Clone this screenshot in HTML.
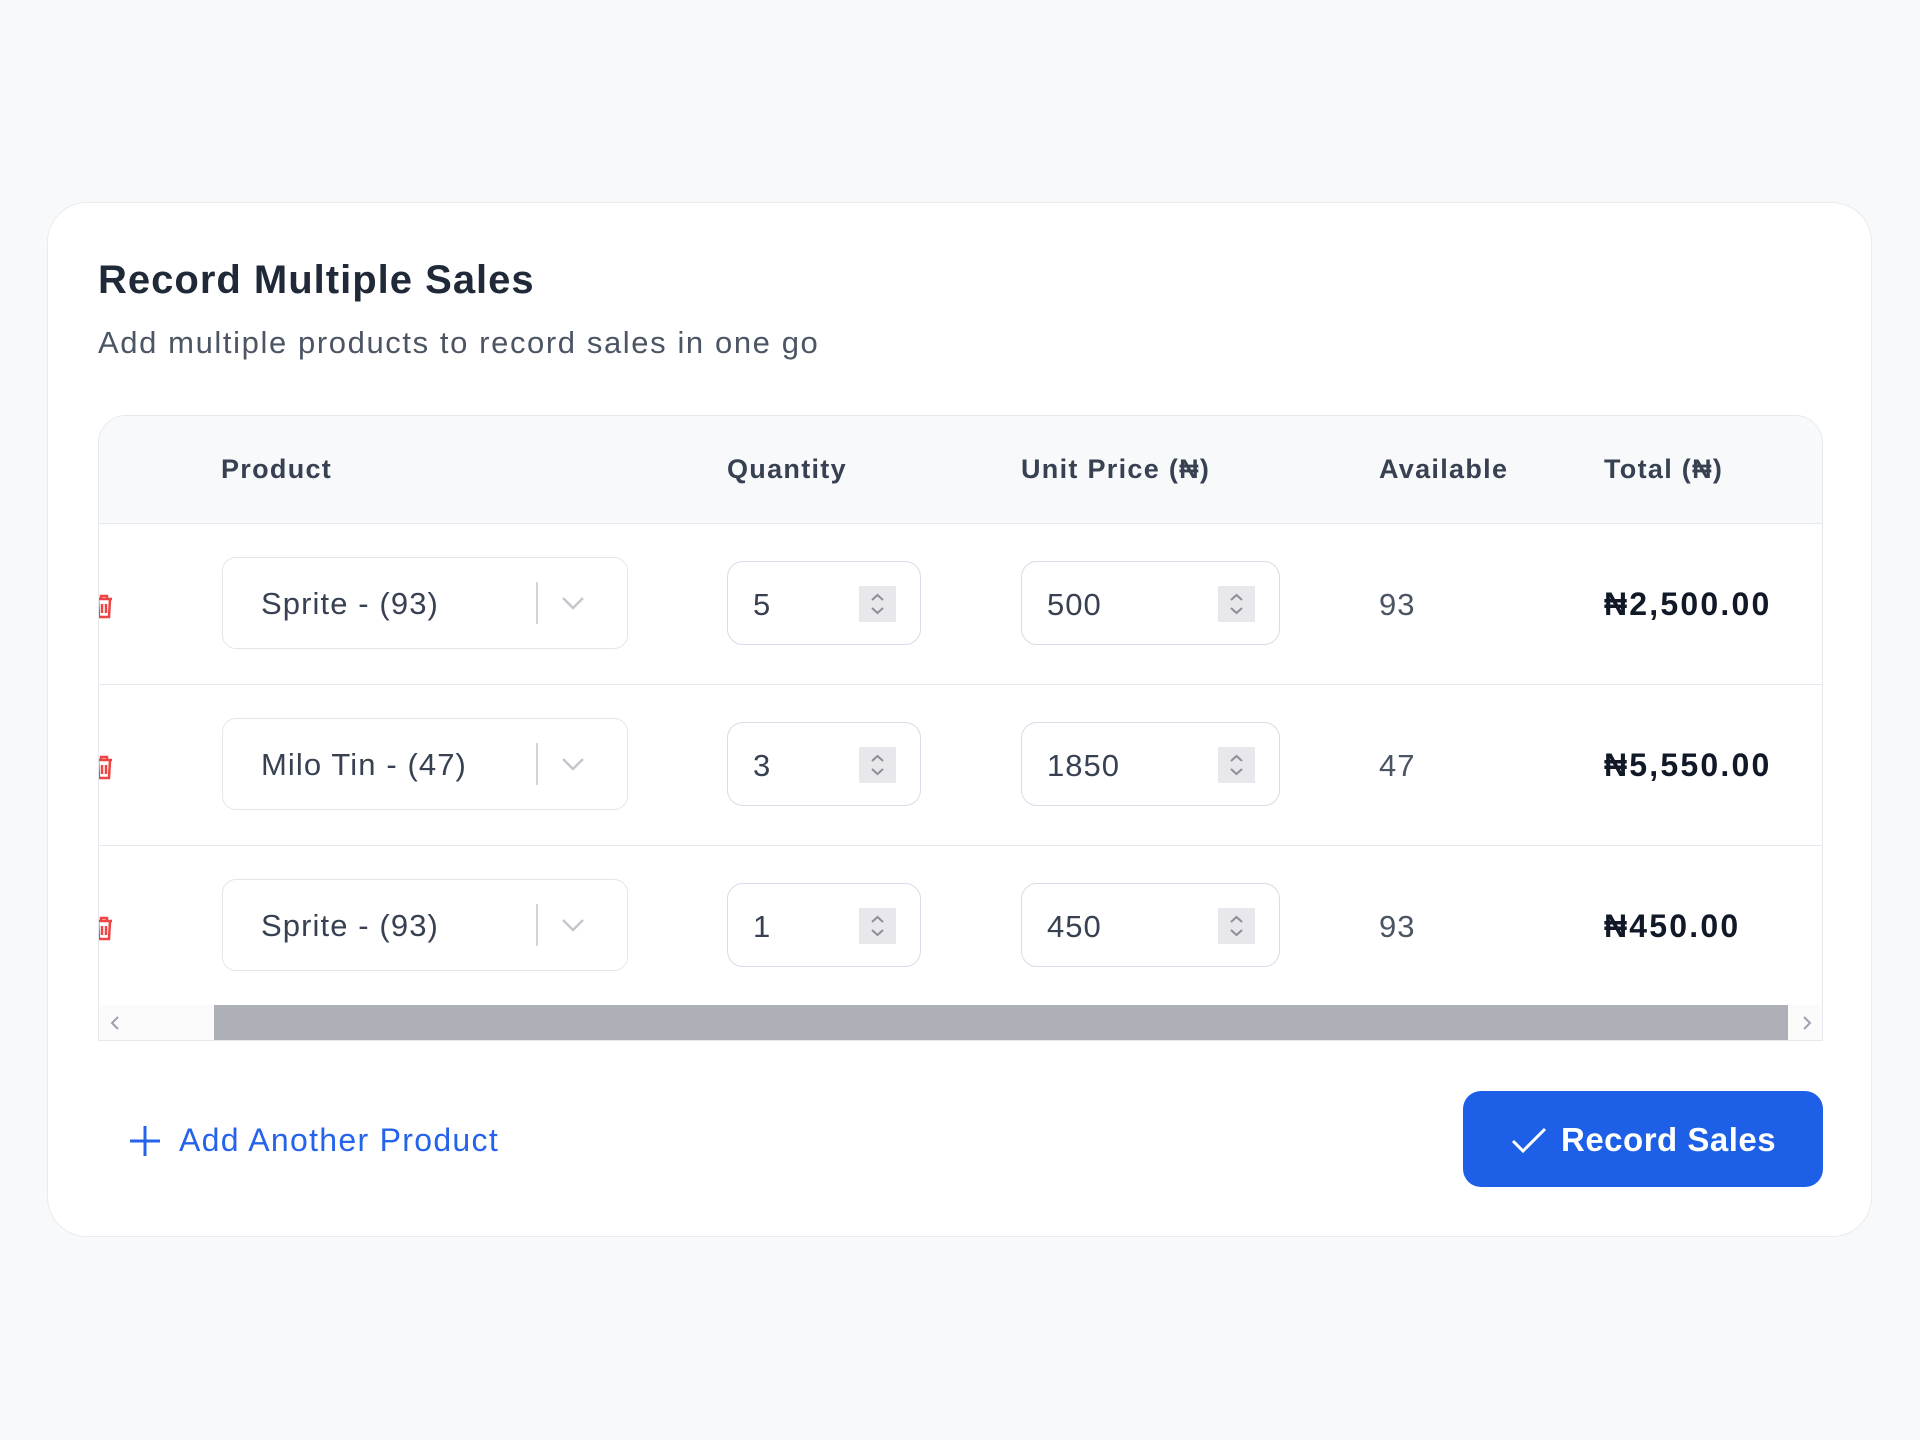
<!DOCTYPE html>
<html><head><style>
*{box-sizing:border-box;margin:0;padding:0}
body{width:1920px;height:1440px;background:#f8f9fb;font-family:"Liberation Sans",sans-serif;position:relative;overflow:hidden;color:#1f2937}
.card{position:absolute;left:47px;top:202px;width:1825px;height:1035px;background:#fff;border:1px solid #e8ebf0;border-radius:40px}
.abs{position:absolute}
h1{position:absolute;left:98px;top:258px;font-size:40px;font-weight:bold;color:#1f2937;letter-spacing:1px}
.sub{position:absolute;left:98px;top:325px;font-size:31px;color:#4b5563;letter-spacing:1.6px}
.tbl{position:absolute;left:98px;top:415px;width:1725px;height:626px;border:1px solid #e5e8ee;border-radius:28px 28px 0 0;overflow:hidden;background:#fff}
.head{position:absolute;left:0;top:0;width:100%;height:108px;background:#f8f9fb;border-bottom:1px solid #e5e8ee}
.th{position:absolute;top:38px;font-size:27px;font-weight:bold;color:#374151;letter-spacing:1.3px}
.row{position:absolute;left:0;width:100%;height:161px;border-bottom:1px solid #e5e8ee}
.sel{position:absolute;left:123px;width:406px;height:92px;border:1.5px solid #e2e6ec;border-radius:14px;top:33px}
.sel span{position:absolute;left:38px;top:28px;font-size:31px;color:#374151;letter-spacing:1.1px}
.sel i{position:absolute;left:313px;top:24px;width:2px;height:42px;background:#d1d5db}
.sel svg{position:absolute;left:337px;top:36px}
.inp{position:absolute;top:37px;height:84px;border:1.5px solid #d6dde6;border-radius:16px}
.inp span{position:absolute;left:25px;top:25px;font-size:31px;color:#374151;letter-spacing:1px}
.spin{position:absolute;top:24px;width:37px;height:36px;background:#e8e8ec}
.av{position:absolute;left:1280px;top:63px;font-size:31px;color:#4b5563;letter-spacing:1px}
.tot{position:absolute;left:1505px;top:62px;font-size:32px;font-weight:bold;color:#111827;letter-spacing:2.2px}
.trash{position:absolute;left:-6px;top:68px}
</style></head><body>
<div class="card"></div>
<h1>Record Multiple Sales</h1>
<div class="sub">Add multiple products to record sales in one go</div>
<div class="tbl">
<div class="head">
<div class="th" style="left:122px">Product</div>
<div class="th" style="left:628px">Quantity</div>
<div class="th" style="left:922px">Unit Price (₦)</div>
<div class="th" style="left:1280px">Available</div>
<div class="th" style="left:1505px">Total (₦)</div>
</div>

<div class="row" style="top:108px">
<svg class="trash" width="22" height="28" viewBox="0 0 22 28"><path d="M3 7h16M8 7V4h6v3M5 7l1 18h10l1-18M9 12v9M13 12v9" fill="none" stroke="#ef4444" stroke-width="2.5"/></svg>
<div class="sel"><span>Sprite - (93)</span><i></i><svg width="26" height="18" viewBox="0 0 26 18"><path d="M3 4l10 10 10-10" fill="none" stroke="#c4c8ce" stroke-width="2.5"/></svg></div>
<div class="inp" style="left:628px;width:194px"><span>5</span><div class="spin" style="left:131px"><svg width="37" height="36" viewBox="0 0 37 36"><path d="M13 14l5.5-5 5.5 5M13 22l5.5 5 5.5-5" fill="none" stroke="#8b8f96" stroke-width="2"/></svg></div></div>
<div class="inp" style="left:922px;width:259px"><span>500</span><div class="spin" style="left:196px"><svg width="37" height="36" viewBox="0 0 37 36"><path d="M13 14l5.5-5 5.5 5M13 22l5.5 5 5.5-5" fill="none" stroke="#8b8f96" stroke-width="2"/></svg></div></div>
<div class="av">93</div><div class="tot">₦2,500.00</div>
</div>

<div class="row" style="top:269px">
<svg class="trash" width="22" height="28" viewBox="0 0 22 28"><path d="M3 7h16M8 7V4h6v3M5 7l1 18h10l1-18M9 12v9M13 12v9" fill="none" stroke="#ef4444" stroke-width="2.5"/></svg>
<div class="sel"><span>Milo Tin - (47)</span><i></i><svg width="26" height="18" viewBox="0 0 26 18"><path d="M3 4l10 10 10-10" fill="none" stroke="#c4c8ce" stroke-width="2.5"/></svg></div>
<div class="inp" style="left:628px;width:194px"><span>3</span><div class="spin" style="left:131px"><svg width="37" height="36" viewBox="0 0 37 36"><path d="M13 14l5.5-5 5.5 5M13 22l5.5 5 5.5-5" fill="none" stroke="#8b8f96" stroke-width="2"/></svg></div></div>
<div class="inp" style="left:922px;width:259px"><span>1850</span><div class="spin" style="left:196px"><svg width="37" height="36" viewBox="0 0 37 36"><path d="M13 14l5.5-5 5.5 5M13 22l5.5 5 5.5-5" fill="none" stroke="#8b8f96" stroke-width="2"/></svg></div></div>
<div class="av">47</div><div class="tot">₦5,550.00</div>
</div>

<div class="row" style="top:430px;border-bottom:none">
<svg class="trash" width="22" height="28" viewBox="0 0 22 28"><path d="M3 7h16M8 7V4h6v3M5 7l1 18h10l1-18M9 12v9M13 12v9" fill="none" stroke="#ef4444" stroke-width="2.5"/></svg>
<div class="sel"><span>Sprite - (93)</span><i></i><svg width="26" height="18" viewBox="0 0 26 18"><path d="M3 4l10 10 10-10" fill="none" stroke="#c4c8ce" stroke-width="2.5"/></svg></div>
<div class="inp" style="left:628px;width:194px"><span>1</span><div class="spin" style="left:131px"><svg width="37" height="36" viewBox="0 0 37 36"><path d="M13 14l5.5-5 5.5 5M13 22l5.5 5 5.5-5" fill="none" stroke="#8b8f96" stroke-width="2"/></svg></div></div>
<div class="inp" style="left:922px;width:259px"><span>450</span><div class="spin" style="left:196px"><svg width="37" height="36" viewBox="0 0 37 36"><path d="M13 14l5.5-5 5.5 5M13 22l5.5 5 5.5-5" fill="none" stroke="#8b8f96" stroke-width="2"/></svg></div></div>
<div class="av">93</div><div class="tot">₦450.00</div>
</div>

<div class="abs" style="left:0;top:589px;width:100%;height:37px;background:#fbfbfc"></div>
<div class="abs" style="left:115px;top:589px;width:1574px;height:36px;background:#adb1b7"></div>
<svg class="abs" style="left:8px;top:598px" width="16" height="18" viewBox="0 0 16 18"><path d="M11 3l-6 6 6 6" fill="none" stroke="#9ca3af" stroke-width="2"/></svg>
<svg class="abs" style="left:1700px;top:598px" width="16" height="18" viewBox="0 0 16 18"><path d="M5 3l6 6-6 6" fill="none" stroke="#9ca3af" stroke-width="2"/></svg>
</div>

<svg class="abs" style="left:128px;top:1124px" width="34" height="34" viewBox="0 0 34 34"><path d="M17 2v30M2 17h30" stroke="#2563eb" stroke-width="3"/></svg>
<div class="abs" style="left:179px;top:1122px;font-size:32px;color:#2563eb;letter-spacing:1.3px">Add Another Product</div>
<div class="abs" style="left:1463px;top:1091px;width:360px;height:96px;background:#1d5fe6;border-radius:18px"></div>
<svg class="abs" style="left:1510px;top:1126px" width="38" height="30" viewBox="0 0 38 30"><path d="M3 15l10 10L35 3" fill="none" stroke="#fff" stroke-width="3"/></svg>
<div class="abs" style="left:1561px;top:1121px;font-size:33px;font-weight:bold;color:#fff;letter-spacing:0.5px">Record Sales</div>
</body></html>
